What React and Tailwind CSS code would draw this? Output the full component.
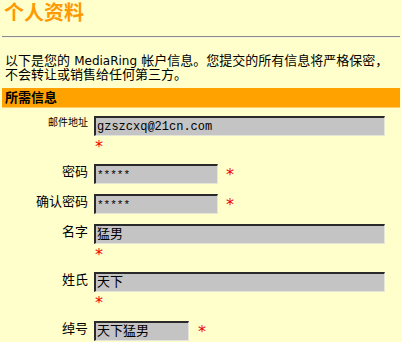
import React from "react";

const cjk = { fontFamily: '"DejaVu Sans", "Noto Sans CJK SC", sans-serif' };
const mono = { fontFamily: '"Liberation Mono", "Noto Sans CJK SC", monospace' };

function Field({ value, width, size = "text-[12px]" }) {
  return (
    <div
      className={`h-[20px] ${width} ${size} bg-[#c4c4c4] border-t-2 border-l-2 border-t-[#2a2a2a] border-l-[#2a2a2a] border-r border-b border-r-[#e6e6d8] border-b-[#e6e6d8] pl-[1px] flex items-center leading-[16px] text-black overflow-hidden whitespace-nowrap`}
      style={mono}
    >
      {value}
    </div>
  );
}

function Star({ className = "" }) {
  return (
    <span
      className={`block text-[#ee0000] text-[16px] leading-[16px] h-[16px] ${className}`}
      style={{ fontFamily: '"DejaVu Sans", sans-serif' }}
    >
      *
    </span>
  );
}

function Row({ label, small, children, className = "" }) {
  return (
    <div className={`flex items-start ${className}`}>
      <div
        className={`w-[86px] shrink-0 text-right text-black ${
          small ? "text-[10px] leading-[12px] pt-[1px]" : "text-[13px] leading-[14px] pt-[1px]"
        }`}
        style={cjk}
      >
        {label}
      </div>
      <div className="ml-[6px]">{children}</div>
    </div>
  );
}

export default function App() {
  return (
    <main className="w-[402px] h-[342px] bg-[#ffffcc] overflow-hidden px-[2px]" style={cjk}>
      <h1 className="pt-[1px] pl-[2px] text-[20px] leading-[24px] font-bold text-[#ff9900]">
        个人资料
      </h1>
      <div className="mt-[11px] h-[2px] border-t border-[#8a8a8a] border-b border-b-[#f4f4e0]" />

      <p className="mt-[16px] pl-[3px] text-[13px] leading-[14px] text-black">
        以下是您的 <span className="text-[12px]">MediaRing</span> 帐户信息。您提交的所有信息将严格保密，
        <br />
        不会转让或销售给任何第三方。
      </p>

      <div className="mt-[6px] h-[20px] bg-[#ffa200] border-b border-b-[#ffcc66] pl-[3px] flex items-center text-[13px] font-bold text-black">
        所需信息
      </div>

      <div className="mt-[8px]">
        <Row label="邮件地址" small>
          <Field value="gzszcxq@21cn.com" width="w-[291px]" />
          <div className="h-[28px] pt-[3px] pl-[1px]">
            <Star />
          </div>
        </Row>

        <Row label="密码" className="mb-[10px]">
          <div className="flex items-center">
            <Field value="*****" width="w-[124px]" size="text-[11px]" />
            <Star className="ml-[8px] mt-[2px]" />
          </div>
        </Row>

        <Row label="确认密码" className="mb-[10px]">
          <div className="flex items-center">
            <Field value="*****" width="w-[124px]" size="text-[11px]" />
            <Star className="ml-[8px] mt-[2px]" />
          </div>
        </Row>

        <Row label="名字">
          <Field value="猛男" width="w-[291px]" size="text-[13px]" />
          <div className="h-[28px] pt-[3px] pl-[1px]">
            <Star />
          </div>
        </Row>

        <Row label="姓氏">
          <Field value="天下" width="w-[291px]" size="text-[13px]" />
          <div className="h-[29px] pt-[3px] pl-[1px]">
            <Star />
          </div>
        </Row>

        <Row label="绰号">
          <div className="flex items-center">
            <Field value="天下猛男" width="w-[95px]" size="text-[13px]" />
            <Star className="ml-[9px] mt-[2px]" />
          </div>
        </Row>
      </div>
    </main>
  );
}
